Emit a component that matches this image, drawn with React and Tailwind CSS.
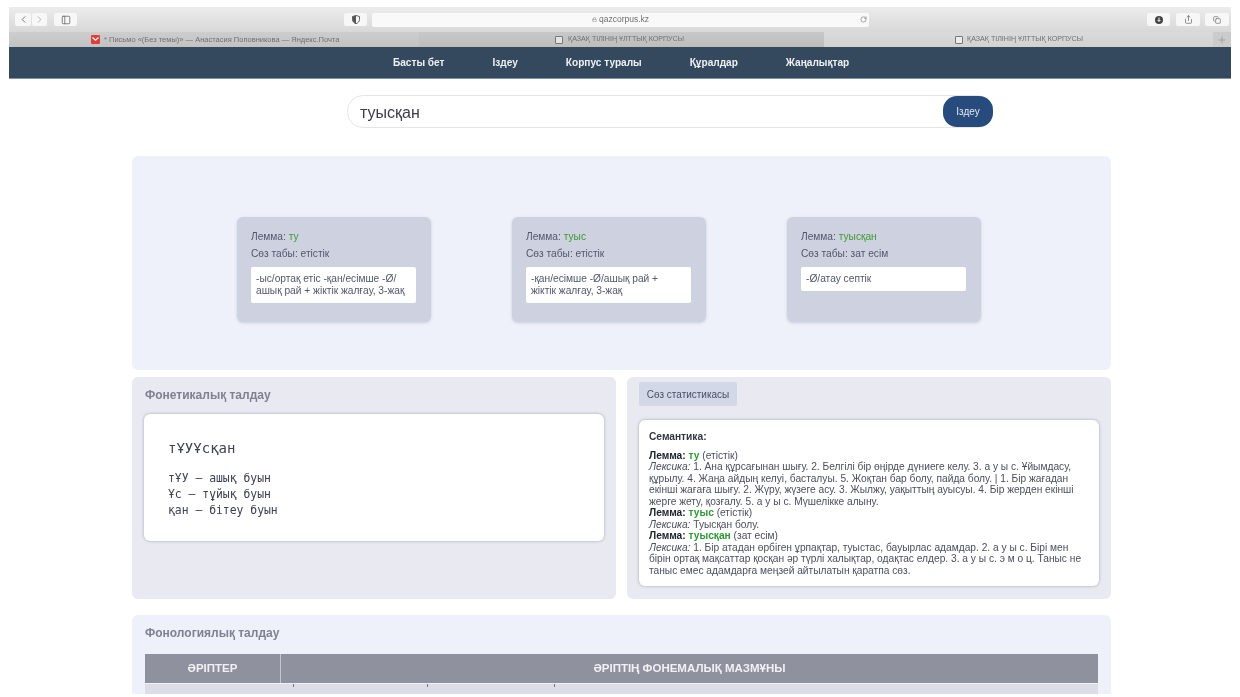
import { ChevronLeft, ChevronRight, PanelLeft, RotateCw, Share, Copy, Lock, Plus } from "lucide-react";

const sans = "font-['Liberation_Sans',Arial,sans-serif]";
const mono = "font-['DejaVu_Sans_Mono',monospace]";

const navItems = ["Басты бет", "Іздеу", "Корпус туралы", "Құралдар", "Жаңалықтар"];

const cards = [
    {
        lemma: "ту",
        pos: "етістік",
        text: "-ыс/ортақ етіс -қан/есімше -Ø/ ашық рай + жіктік жалғау, 3-жақ",
    },
    {
        lemma: "туыс",
        pos: "етістік",
        text: "-қан/есімше -Ø/ашық рай + жіктік жалғау, 3-жақ",
    },
    {
        lemma: "туысқан",
        pos: "зат есім",
        text: "-Ø/атау септік",
    },
];

function ToolButton({ className = "", children }) {
    return (
        <div className={`flex h-[13px] items-center justify-center rounded-[2px] bg-[#f7f7f7] text-[#6d6d6d] ${className}`}>
            {children}
        </div>
    );
}

function BrowserChrome() {
    return (
        <div className={`${sans} text-[#6f7073]`}>
            <div className="flex h-[25px] items-center bg-gradient-to-b from-[#ececec] to-[#d8d8d8] pl-[6px] pr-[2px]">
                <ToolButton className="w-[16px]"><ChevronLeft size={11} /></ToolButton>
                <ToolButton className="ml-px w-[15px]"><ChevronRight size={11} className="text-[#b0b0b0]" /></ToolButton>
                <ToolButton className="ml-[7px] w-[23px]"><PanelLeft size={10} /></ToolButton>
                <ToolButton className="ml-[267px] w-[23px]">
                    <svg width="8" height="9" viewBox="0 0 8 9">
                        <path d="M4 .5 7.5 1.5V4.5C7.5 6.5 6 8 4 8.7 2 8 .5 6.5.5 4.5V1.5Z" fill="none" stroke="#555" strokeWidth=".9" />
                        <path d="M4 .5V8.7C2 8 .5 6.5.5 4.5V1.5Z" fill="#555" />
                    </svg>
                </ToolButton>
                <div className="relative ml-[5px] flex h-[14px] w-[497px] items-center justify-center gap-[2px] rounded-[2px] bg-[#f9f9f9] text-[8.5px]">
                    <Lock size={5} />
                    <span>qazcorpus.kz</span>
                    <RotateCw size={7} className="absolute right-[2px] top-[3px]" />
                </div>
                <ToolButton className="ml-[278px] w-[23px]">
                    <svg width="8" height="8" viewBox="0 0 8 8">
                        <circle cx="4" cy="4" r="4" fill="#444" />
                        <path d="M4 1.5V5M2.6 4 4 5.6 5.4 4" stroke="#fff" strokeWidth="1" fill="none" />
                    </svg>
                </ToolButton>
                <ToolButton className="ml-[6px] w-[24px]"><Share size={9} /></ToolButton>
                <ToolButton className="ml-[5px] w-[24px]"><Copy size={8} /></ToolButton>
            </div>
            <div className="flex h-[15px] items-center text-[7.1px]">
                <div className="flex h-full w-[410px] items-center bg-gradient-to-b from-[#cdcdcd] to-[#c2c2c2] pl-[82px] text-[7.5px]">
                    <svg width="9" height="9" viewBox="0 0 9 9" className="mr-[4px]">
                        <rect width="9" height="9" rx="1" fill="#e23d38" />
                        <path d="M1.5 2.5 4.5 5.2 7.5 2.5" stroke="#fff" strokeWidth="1.2" fill="none" />
                    </svg>
                    <span>* Письмо «(Без темы)» — Анастасия Поповникова — Яндекс.Почта</span>
                </div>
                <div className="flex h-full w-[405px] items-center bg-gradient-to-b from-[#c8c8c8] to-[#bdbdbd] pl-[136px]">
                    <span className="mr-[5px] size-[8px] rounded-[1px] border border-[#777] bg-[#e4e4e4]" />
                    <span>ҚАЗАҚ ТІЛІНІҢ ҰЛТТЫҚ КОРПУСЫ</span>
                </div>
                <div className="flex h-full w-[389px] items-center bg-gradient-to-b from-[#dadada] to-[#d2d2d2] pl-[131px]">
                    <span className="mr-[4px] size-[8px] rounded-[1px] border border-[#777] bg-[#ececec]" />
                    <span>ҚАЗАҚ ТІЛІНІҢ ҰЛТТЫҚ КОРПУСЫ</span>
                </div>
                <div className="flex h-full flex-1 items-center justify-center bg-[#cbcbcb] text-[#9a9a9a]">
                    <Plus size={10} />
                </div>
            </div>
        </div>
    );
}

function LemmaCard({ card }) {
    return (
        <div className="h-[105px] w-[194px] rounded-[6px] bg-[#ced1df] pl-[14px] pr-[15px] pt-[14px] text-[10.2px] text-[#54576c] shadow-[0_1px_3px_rgba(120,125,150,0.3)]">
            <div className="leading-[12px]">
                Лемма: <span className="text-[#3f9a34]">{card.lemma}</span>
            </div>
            <div className="mt-[5px] leading-[12px]">Сөз табы: {card.pos}</div>
            <div className="mt-[7px] rounded-[2px] bg-white py-[6px] pl-[5px] pr-[8px] leading-[12px]">
                {card.text}
            </div>
        </div>
    );
}

function Lemma({ word, pos }) {
    return (
        <div>
            <b className="text-[#22242e]">Лемма:</b> <b className="text-[#2d9a33]">{word}</b> ({pos})
        </div>
    );
}

export default function App() {
    return (
        <div className={`${sans} h-[697px] overflow-hidden bg-white px-[9px] pt-[7px] blur-[0.6px]`}>
            <BrowserChrome />

            <nav className="flex h-[32px] items-center gap-[48px] border-b border-[#7d93ad] bg-[#34495e] pl-[384px] text-[10.1px] font-bold text-[#eef1f4]">
                {navItems.map((item) => (
                    <span key={item}>{item}</span>
                ))}
            </nav>

            <div className="ml-[338px] mt-[16px] flex h-[33px] w-[646px] rounded-[16px] border border-[#e6e6e6]">
                <div className="flex-1 pl-[12px] text-[16px] leading-[33px] text-[#3d3d46]">туысқан</div>
                <div className="-mr-px flex h-[31px] w-[50px] items-center justify-center rounded-[14px] bg-[#264b7c] text-[10px] text-[#e3e8f0]">
                    Іздеу
                </div>
            </div>

            <div className="ml-[123px] w-[979px]">
                <section className="mt-[28px] flex h-[214px] gap-[81px] rounded-[6px] bg-[#eef1fa] pl-[105px] pt-[61px]">
                    {cards.map((card) => (
                        <LemmaCard key={card.lemma} card={card} />
                    ))}
                </section>

                <div className="mt-[7px] flex h-[222px] gap-[11px]">
                    <section className="flex-1 rounded-[6px] bg-[#e8e9f1] px-[12px] pt-[12px]">
                        <h2 className="pl-px text-[12px] font-bold leading-[13px] text-[#7f8191]">Фонетикалық талдау</h2>
                        <div className={`${mono} mt-[12px] h-[127px] rounded-[6px] bg-white pl-[24px] pt-[25px] text-[#3f4154] shadow-[0_0_3px_rgba(90,95,120,0.5)]`}>
                            <div className="text-[14px] leading-[18px]">тҰУҰсқан</div>
                            <div className="mt-[13px] text-[11.4px] leading-[16px]">
                                <div>тҰУ – ашық буын</div>
                                <div>Ұс – тұйық буын</div>
                                <div>қан – бітеу буын</div>
                            </div>
                        </div>
                    </section>

                    <section className="flex-1 rounded-[6px] bg-[#e8e9f1] px-[12px] pt-[5px]">
                        <div className="flex h-[24px] w-[98px] items-center justify-center rounded-[2px] bg-[#d3d8e8] text-[10px] text-[#4a4e63]">
                            Сөз статистикасы
                        </div>
                        <div className="mt-[14px] h-[166px] rounded-[6px] bg-white pl-[10px] pr-[13px] pt-[11px] text-[10.2px] leading-[11.55px] text-[#4c4e5e] shadow-[0_0_3px_rgba(90,95,120,0.5)]">
                            <b className="text-[#33353f]">Семантика:</b>
                            <div className="mt-[7px]">
                                <Lemma word="ту" pos="етістік" />
                                <div>
                                    <i>Лексика:</i> 1. Ана құрсағынан шығу. 2. Белгілі бір өңірде дүниеге келу. 3. а у ы с. Ұйымдасу, құрылу. 4. Жаңа айдың келуі, басталуы. 5. Жоқтан бар болу, пайда болу. | 1. Бір жағадан екінші жағаға шығу. 2. Жүру, жүзеге асу. 3. Жылжу, уақыттың ауысуы. 4. Бір жерден екінші жерге жету, қозғалу. 5. а у ы с. Мүшелікке алыну.
                                </div>
                                <Lemma word="туыс" pos="етістік" />
                                <div><i>Лексика:</i> Туысқан болу.</div>
                                <Lemma word="туысқан" pos="зат есім" />
                                <div>
                                    <i>Лексика:</i> 1. Бір атадан өрбіген ұрпақтар, туыстас, бауырлас адамдар. 2. а у ы с. Бірі мен бірін ортақ мақсаттар қосқан әр түрлі халықтар, одақтас елдер. 3. а у ы с. э м о ц. Таныс не таныс емес адамдарға меңзей айтылатын қаратпа сөз.
                                </div>
                            </div>
                        </div>
                    </section>
                </div>

                <section className="mt-[16px] h-[79px] rounded-t-[6px] bg-[#eef1fa] px-[13px] pt-[12px]">
                    <h2 className="text-[12px] font-bold leading-[13px] text-[#7f8191]">Фонологиялық талдау</h2>
                    <div className="mt-[14px] flex h-[30px] border-b border-[#eef1fa] bg-[#90919e] text-[11.5px] font-bold text-[#f1f1f5]">
                        <div className="flex w-[136px] items-center justify-center border-r border-[#c4c5cf]">ӘРІПТЕР</div>
                        <div className="flex flex-1 items-center justify-center">ӘРІПТІҢ ФОНЕМАЛЫҚ МАЗМҰНЫ</div>
                    </div>
                    <div className="flex h-[10px] items-start bg-[#dcdde6] pl-[148px]">
                        <span className="h-[3px] w-px bg-[#777]" />
                        <span className="ml-[133px] h-[3px] w-px bg-[#777]" />
                        <span className="ml-[126px] h-[3px] w-px bg-[#777]" />
                    </div>
                </section>
            </div>
        </div>
    );
}
